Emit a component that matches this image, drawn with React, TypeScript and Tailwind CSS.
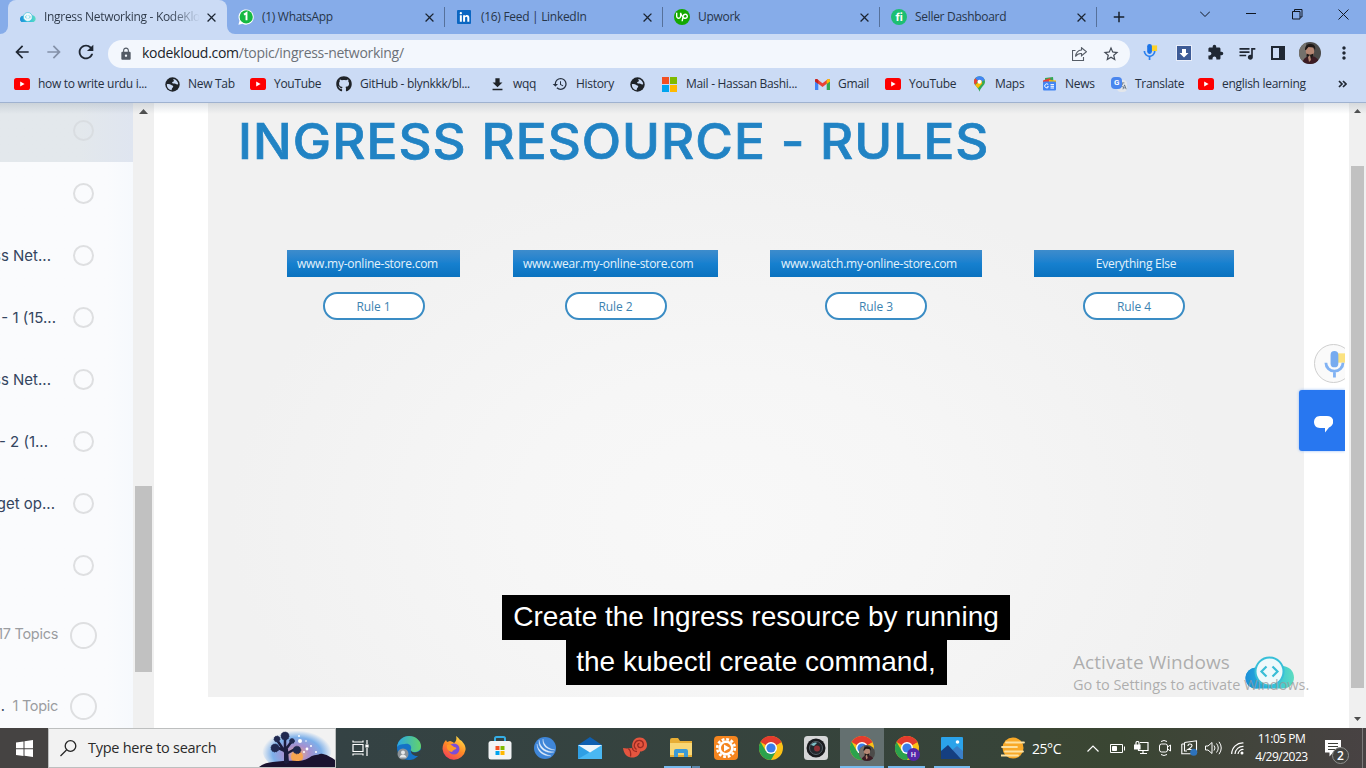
import React from 'react';
import { MdHistory, MdDownload, MdExtension, MdQueueMusic, MdArrowBack, MdArrowForward, MdRefresh, MdLock, MdStarOutline, MdClose, MdMoreVert, MdAdd, MdTranslate } from 'react-icons/md';
import { SiUpwork } from 'react-icons/si';
import { FaGithub, FaLinkedinIn } from 'react-icons/fa';

const YouTube = () => (
  <svg width="16" height="12" viewBox="0 0 16 12"><rect width="16" height="12" rx="2.6" fill="#fe0000" /><path d="M6.2 3.4v5.2L10.6 6z" fill="#fff" /></svg>
);

const Globe = () => (
  <svg width="15" height="15" viewBox="0 0 15 15">
    <circle cx="7.500" cy="7.500" r="7.200" fill="#1f2328" />
    <path d="M1.800 7.200c1.600-.5 3.300-.2 4.200.6.800.8 2 .5 2.200 1.500.2 1.200-1 1.500-1.300 2.400-.2.800-.2 1.400-.5 1.500C3.500 12.600 1.700 10.300 1.800 7.200z" fill="#cbdbf5" />
    <path d="M8.300 1.900c-.2 1 .8 1 .6 2-.3.900-1.600.6-1.800 1.500 0 1 1.300 1.200 2.500 1 1.200-.1 1.500.9 2.500 1 .6.100 1-.2 1.100-.4C13 4.300 11 2.200 8.300 1.900z" fill="#cbdbf5" />
  </svg>
);

const CloudLogo = ({ w = 50, id }: { w?: number; id: string }) => (
  <svg width={w} height={w * 0.66} viewBox="0 0 50 33">
    <defs><linearGradient id={id}><stop offset="0" stopColor="#1c8fd8" /><stop offset="0.55" stopColor="#2cc0dc" /><stop offset="1" stopColor="#5fdcc0" /></linearGradient></defs>
    <circle cx="11" cy="22" r="10.500" fill={`url(#${id})`} />
    <path d="M11 11.500C16 7 33 7 37 10c7 0 12 5 12 11.500S44 32.500 38 32.500H11C4 32.500 .5 27 .5 22S5 12 11 11.500z" fill={`url(#${id})`} />
    <circle cx="24.500" cy="15.500" r="14" fill="#eef9fb" stroke="#38bfd8" strokeWidth="2" />
    <path d="M21.500 10.500l-5 5 5 5M27.500 10.500l5 5-5 5" fill="none" stroke="#39bdd6" strokeWidth="2.200" />
  </svg>
);

const WhatsApp = () => (
  <svg width="16" height="16" viewBox="0 0 16 16">
    <path d="M.4 15.800l1.100-4A7.600 7.600 0 1 1 4.600 14.800z" fill="#fff" />
    <circle cx="8.200" cy="7.900" r="6.600" fill="#15b942" />
    <path d="M6 5.600L8.500 4v7.300" fill="none" stroke="#fff" strokeWidth="1.900" />
  </svg>
);

const Gmail = () => (
  <svg width="15" height="11" viewBox="0 0 15 11">
    <path d="M0 2v9h3.300V4z" fill="#4285f4" /><path d="M15 2v9h-3.300V4z" fill="#34a853" />
    <path d="M0 2.300V1.500C0 0 1.600-.3 2.600.5l4.900 3.700L12.400.5C13.400-.3 15 0 15 1.500v.8L7.500 8z" fill="#ea4335" />
    <path d="M11.700 1v3.900L15 2.400v-.9C15 0 13.400-.3 12.400.5z" fill="#fbbc04" /><path d="M0 1.500v.9l3.300 2.500V1L2.600.5C1.600-.3 0 0 0 1.500z" fill="#c5221f" />
  </svg>
);

const Pin = () => (
  <svg width="11" height="16" viewBox="0 0 12 17">
    <path d="M6 0a6 6 0 0 1 6 6c0 4-4.700 5.500-6 11C4.700 11.500 0 10 0 6a6 6 0 0 1 6-6z" fill="#34a853" />
    <path d="M6 0a6 6 0 0 1 5.600 3.800L6 8 1.300 2.200A6 6 0 0 1 6 0z" fill="#4285f4" />
    <path d="M1.300 2.200L4.300 5 1.300 9.500A6 6 0 0 1 1.300 2.200z" fill="#ea4335" />
    <path d="M1.200 9.600L8 3.800 9 8l-4.700 5z" fill="#fbbc04" /><circle cx="6" cy="6" r="2.200" fill="#fff" />
  </svg>
);

const News = () => (
  <svg width="15" height="14" viewBox="0 0 15 14">
    <path d="M3 1l8-1 .5 5H3z" fill="#34a853" /><path d="M1 3.500L8 1l2 5H1z" fill="#ea4335" /><path d="M7 3l7 .5V8H7z" fill="#fbbc04" />
    <rect x="1" y="4.600" width="13" height="9" rx="1" fill="#4285f4" /><path d="M6.300 7.600a2 2 0 1 0 .2 2.200H5M8.500 7.600H12M8.500 9.300H12M8.500 11H12" stroke="#fff" fill="none" />
  </svg>
);

const Translate = () => (
  <span className="relative block h-[15px] w-[16px]">
    <span className="absolute right-0 bottom-0 grid h-[12px] w-[10px] place-items-center rounded-sm bg-[#e3e6ea] text-[9px] text-[#5f6f80]"><MdTranslate /></span>
    <span className="absolute top-0 left-0 grid h-[12px] w-[11px] place-items-center rounded-sm bg-[#4a86ee] font-['Roboto'] text-[8px] leading-[12px] font-bold text-white">G</span>
  </span>
);

const Mic = ({ s = 18, soft = false }: { s?: number; soft?: boolean }) => (
  <svg width={s} height={s} viewBox="0 0 18 18" opacity={soft ? 0.58 : 1}>
    <rect x="9" y="1.500" width="7" height="6" fill="#fdd22a" /><rect x="5.500" y="0" width="5" height="10.500" rx="2.500" fill="#1a73e8" />
    <path d="M2.500 7.500a5.500 5.500 0 0 0 11 0M8 13v4" fill="none" stroke="#2b80ee" strokeWidth="1.800" />
  </svg>
);

const Face = ({ s }: { s: number }) => (
  <svg width={s} height={s} viewBox="0 0 22 22">
    <defs><clipPath id={`face${s}`}><circle cx="11" cy="11" r="11" /></clipPath></defs>
    <g clipPath={`url(#face${s})`}>
      <rect width="22" height="22" fill="#4c4b49" /><rect width="7" height="22" fill="#74716c" />
      <path d="M3 22c1-6 5-8 9-8s8 3 9 8z" fill="#3c1c24" /><ellipse cx="11" cy="9.500" rx="4.200" ry="5.500" fill="#b58773" />
      <path d="M6 8c0-5 3-6.500 6-6s5 2 4 6l-1.500-2.500-5-.5L7 8zM7.500 11.500c2 1.500 5 1.500 7 0-.5 4-2 5-3.500 5s-3-1-3.500-5z" fill="#1f1917" />
      <path d="M9 15l2-2 1 5-2 2z" fill="#b58773" />
    </g>
  </svg>
);

const Chrome = ({ s = 24 }: { s?: number }) => (
  <svg width={s} height={s} viewBox="0 0 24 24">
    <circle cx="12" cy="12" r="12" fill="#fbc116" />
    <path d="M12 12L1.600 6A12 12 0 0 1 22.400 6z" fill="#e33b2e" /><path d="M12 6h10.400L12 12z" fill="#e33b2e" />
    <path d="M1.600 6A12 12 0 0 0 12 24l5.200-9L12 12 6.800 15z" fill="#2ba24c" />
    <circle cx="12" cy="12" r="6" fill="#fff" /><circle cx="12" cy="12" r="4.600" fill="#3b7de9" />
  </svg>
);

function Tab({ icon, title, box, pad, active = false }: { icon: React.ReactNode; title: string; box: string; pad: string; active?: boolean }) {
  return (
    <div className={`relative flex h-[34px] items-center ${box} ${pad} ${active ? 'rounded-t-[8px] bg-[#cbdbf5]' : ''}`}>
      <span className="flex w-6 shrink-0 items-center">{icon}</span>
      <span className={`flex-1 overflow-hidden whitespace-nowrap pb-px ${active ? 'bg-gradient-to-r from-[#2d3848] from-80% to-[#cbdbf5] bg-clip-text text-transparent' : 'text-[#26354a]'}`}>{title}</span>
      <MdClose className="ml-1 shrink-0 text-[15px] text-[#1b2431]" />
    </div>
  );
}

const Divider = () => <div className="h-5 w-px bg-[#56719b]" />;

function Bookmark({ icon, label, box, gap }: { icon: React.ReactNode; label?: string; box: string; gap: string }) {
  return (
    <div className={`flex shrink-0 items-center whitespace-nowrap ${box}`}>
      <span className={`flex shrink-0 items-center ${gap}`}>{icon}</span>
      <span>{label}</span>
    </div>
  );
}

function Browser() {
  return (
    <header className="h-[103px] border-b border-[#9fb2d0] bg-[#cbdbf5] font-['Open_Sans',sans-serif] text-[12px] tracking-[-0.3px] text-[#26303f]">
      <div className="flex h-[34px] items-center bg-[#86ace9]">
        <div className="h-full w-2 bg-[#cbdbf5]"><div className="h-full rounded-br-[8px] bg-[#86ace9]" /></div>
        <Tab active icon={<CloudLogo w={16} id="tabcloud" />} title="Ingress Networking - KodeKlo" box="w-[219px]" pad="pl-3 pr-[8px]" />
        <div className="h-full w-2 bg-[#cbdbf5]"><div className="h-full rounded-bl-[8px] bg-[#86ace9]" /></div>
        <Tab icon={<WhatsApp />} title="(1) WhatsApp" box="w-[209px]" pad="pl-[3px] pr-[7px]" />
        <Divider />
        <Tab icon={<span className="grid size-[14px] place-items-center rounded-[1px] bg-[#0a66c2] text-[11px] text-white"><FaLinkedinIn /></span>} title="(16) Feed | LinkedIn" box="w-[217px]" pad="pl-[12px] pr-[7px]" />
        <Divider />
        <Tab icon={<span className="grid size-4 place-items-center rounded-full bg-[#14a800] text-[12px] text-white"><SiUpwork /></span>} title="Upwork" box="w-[216px]" pad="pl-[11px] pr-[7px]" />
        <Divider />
        <Tab icon={<span className="grid size-4 place-items-center rounded-full bg-[#1dbf73] pb-px font-['Inter'] text-[11px] leading-[14px] font-bold text-white">fi</span>} title="Seller Dashboard" box="w-[216px]" pad="pl-[11px] pr-[7px]" />
        <Divider />
        <MdAdd className="ml-[13px] text-[18px] text-[#18202c]" />
        <div className="ml-auto flex h-full w-[184px] pb-[6px] text-[#101722]">
          <span className="grid w-[46px] place-items-center"><svg width="10" height="6" fill="none" stroke="currentColor"><path d="M0 .5l5 5 5-5" /></svg></span>
          <span className="grid w-[46px] place-items-center"><svg width="10" height="2" fill="currentColor"><path d="M0 0h10v1H0z" /></svg></span>
          <span className="grid w-[46px] place-items-center"><svg width="11" height="11" fill="none" stroke="currentColor"><path d="M.5 2.500h7.500v7.500H.5zM2.500 2.500V.5h7.500v7.500H8" /></svg></span>
          <span className="grid w-[46px] place-items-center"><svg width="11" height="11" fill="none" stroke="currentColor"><path d="M.5.5l10 10M10.500.5l-10 10" /></svg></span>
        </div>
      </div>
      <div className="flex h-[36px] items-center pl-[12px] text-[#1f2733]">
        <MdArrowBack className="text-[20px]" />
        <MdArrowForward className="ml-[12px] text-[20px] text-[#8491a8]" />
        <MdRefresh className="ml-[11px] text-[22px]" />
        <div className="mt-[3px] ml-[11px] flex h-[28px] w-[1022px] items-center rounded-full bg-[#f3f7fd] pr-[10px] pl-[11px]">
          <MdLock className="text-[14px] text-[#525a65]" />
          <span className="ml-[9px] pb-[3px] text-[14px] tracking-[-0.28px] text-[#20242a]">kodekloud.com<span className="text-[#6c7178]">/topic/ingress-networking/</span></span>
          <svg className="ml-auto" width="15" height="14" viewBox="0 0 15 14" fill="none" stroke="#555c66" strokeWidth="1.100"><path d="M3.500 3.500h-3v10h11V10M9.500.8l5 4-5 4V6.500C7 6.300 5 7.300 3.500 9.500 4 5.500 6 3.300 9.500 3z" /></svg>
          <MdStarOutline className="ml-[15px] text-[18px] text-[#444b56]" />
        </div>
        <div className="ml-[12px] flex items-center pt-[1px]">
          <Mic s={17} />
          <span className="ml-[17px] grid size-[16px] place-items-center border border-[#e9eefa] bg-[#3d5b96]"><svg width="10" height="10" fill="#fff"><path d="M3 1h4v4h2.500L5 9.500.5 5H3z" /></svg></span>
          <MdExtension className="ml-[15px] text-[17px]" />
          <MdQueueMusic className="ml-[13px] text-[20px]" />
          <svg className="ml-[14px]" width="14" height="14"><path d="M1 1h12v12H1z" fill="none" stroke="#1f2733" strokeWidth="2" /><path d="M8 0h6v14H8z" fill="#1f2733" /></svg>
          <span className="ml-[14px]"><Face s={22} /></span>
          <MdMoreVert className="ml-[13px] text-[20px]" />
        </div>
      </div>
      <div className="flex h-[28px] items-center pl-[14px]">
        <Bookmark icon={<YouTube />} label="how to write urdu i..." box="w-[151px]" gap="w-[24px]" />
        <Bookmark icon={<Globe />} label="New Tab" box="w-[85px]" gap="w-[23px]" />
        <Bookmark icon={<YouTube />} label="YouTube" box="w-[86px]" gap="w-[24px]" />
        <Bookmark icon={<FaGithub size={16} color="#1f2328" />} label="GitHub - blynkkk/bl..." box="w-[153px]" gap="w-[24px]" />
        <Bookmark icon={<MdDownload size={17} color="#1f2328" />} label="wqq" box="w-[63px]" gap="w-[24px]" />
        <Bookmark icon={<MdHistory size={16} />} label="History" box="w-[78px]" gap="w-[24px]" />
        <Bookmark icon={<Globe />} box="w-[32px]" gap="w-[17px]" />
        <Bookmark icon={<svg width="15" height="15"><path d="M0 0h7v7H0z" fill="#f25022" /><path d="M8 0h7v7H8z" fill="#7fba00" /><path d="M0 8h7v7H0z" fill="#00a4ef" /><path d="M8 8h7v7H8z" fill="#ffb900" /></svg>} label="Mail - Hassan Bashi..." box="w-[153px]" gap="w-[24px]" />
        <Bookmark icon={<Gmail />} label="Gmail" box="w-[70px]" gap="w-[23px]" />
        <Bookmark icon={<YouTube />} label="YouTube" box="w-[89px]" gap="w-[24px]" />
        <Bookmark icon={<Pin />} label="Maps" box="w-[68px]" gap="w-[21px]" />
        <Bookmark icon={<News />} label="News" box="w-[69px]" gap="w-[23px]" />
        <Bookmark icon={<Translate />} label="Translate" box="w-[87px]" gap="w-[24px]" />
        <Bookmark icon={<YouTube />} label="english learning" box="w-[140px]" gap="w-[24px]" />
        <svg width="9" height="8" fill="none" stroke="#1f2733" strokeWidth="1.700"><path d="M1 1l3 3-3 3M5 1l3 3-3 3" /></svg>
      </div>
    </header>
  );
}

const lessons = [
  { text: '', pad: 'pr-[22px]' },
  { text: 'ss Net...', pad: 'pr-[22px]' },
  { text: '- 1 (15...', pad: 'pr-[17px]' },
  { text: 'ss Net...', pad: 'pr-[22px]' },
  { text: '- 2 (1...', pad: 'pr-[25px]' },
  { text: 'get op...', pad: 'pr-[18px]' },
  { text: '', pad: 'pr-[18px]' },
];

function Sidebar() {
  return (
    <aside className="w-[133px] shrink-0 overflow-hidden bg-gradient-to-r from-[#fafbfd] from-80% to-[#f6f9fd] font-['Inter',sans-serif]">
      <div className="flex h-[59px] items-center justify-end bg-gradient-to-r from-[#e3e8ec] from-60% to-[#dfe5f0] pr-[39px]">
        <span className="mb-[4px] size-[21px] rounded-full border-2 border-[#d9dde1]" />
      </div>
      {lessons.map((l, i) => (
        <div key={i} className="flex h-[62px] items-center justify-end pr-[39px] whitespace-nowrap">
          <span className={`pt-[2px] text-[15px] text-[#34455f] ${l.pad}`}>{l.text}</span>
          <span className="size-[21px] shrink-0 rounded-full border-2 border-[#dedfe1]" />
        </div>
      ))}
      <div className="flex h-[78px] items-center justify-end pr-[36px] whitespace-nowrap text-[14.500px] tracking-[-0.3px] text-[#9b9da1]">
        <span className="pr-[12px] pb-[3px]">17 Topics</span><span className="size-[27px] shrink-0 rounded-full border-2 border-[#dedfe1]" />
      </div>
      <div className="flex h-[64px] items-center justify-end pr-[36px] whitespace-nowrap text-[14.500px] tracking-[-0.3px] text-[#9b9da1]">
        <span className="pr-[8px] text-[#34455f]">.</span><span className="pr-[12px]">1 Topic</span><span className="size-[27px] shrink-0 rounded-full border-2 border-[#dedfe1]" />
      </div>
    </aside>
  );
}

function Rule({ host, label, box, align }: { host: string; label: string; box: string; align: string }) {
  return (
    <div className={`flex flex-col items-center ${box}`}>
      <div className={`flex h-[27px] w-full items-center bg-gradient-to-b from-[#3d8ccc] via-[#1680cf] to-[#0a72bf] pt-px text-[12px] tracking-[-0.25px] whitespace-nowrap text-[#e4f2fb] ${align}`}>{host}</div>
      <div className="mt-[15px] flex h-[28px] w-[102px] items-center justify-center rounded-full border-2 border-[#3a8cc4] bg-white pt-px text-[12px] tracking-[-0.1px] text-[#3d83b1]">{label}</div>
    </div>
  );
}

function Lesson() {
  return (
    <main className="relative h-full min-w-0 flex-1 overflow-hidden bg-white pl-[54px]">
      <section className="flex h-[594px] w-[1096px] flex-col bg-[#f1f1f1] bg-[radial-gradient(ellipse_at_47%_70%,#f8f8f8_0%,#f6f6f6_25%,#f1f1f1_60%)] font-['Open_Sans',sans-serif]">
        <h1 className="mt-[9px] ml-[30px] h-[60px] w-[720px] origin-left scale-x-[1.046] font-['Inter',sans-serif] text-[49px] leading-[60px] font-medium tracking-[1px] whitespace-nowrap text-[#2183c4] [-webkit-text-stroke:0.7px_#2183c4]">INGRESS RESOURCE - RULES</h1>
        <div className="mt-[78px] flex pl-[79px]">
          <Rule host="www.my-online-store.com" label="Rule 1" box="w-[173px]" align="pl-[10px]" />
          <Rule host="www.wear.my-online-store.com" label="Rule 2" box="ml-[53px] w-[205px]" align="pl-[10px]" />
          <Rule host="www.watch.my-online-store.com" label="Rule 3" box="ml-[52px] w-[212px]" align="pl-[11px]" />
          <Rule host="Everything Else" label="Rule 4" box="ml-[52px] w-[200px]" align="justify-center pl-1" />
        </div>
        <div className="mt-[275px] flex flex-col items-center font-['Liberation_Sans',sans-serif] text-[28px] whitespace-nowrap text-white">
          <p className="flex h-[45px] w-[508px] items-center justify-center bg-black pb-px">Create the Ingress resource by running</p>
          <p className="flex h-[45px] w-[381px] items-center justify-center bg-black pb-px">the kubectl create command,</p>
        </div>
      </section>
      <div className="absolute top-[241px] right-[-8px] grid size-[39px] place-items-center rounded-full border border-[#cfcfcf] bg-[#fafafa] pt-[3px] pl-[4px]"><Mic s={28} soft /></div>
      <div className="absolute top-[287px] right-0 flex h-[61px] w-[46px] items-center rounded-l-[3px] bg-[#2877f0] pl-[15px] shadow-[0_0_3px_#8fb8f5]">
        <svg className="mt-[8px]" width="19" height="17" fill="#fff"><path d="M6 0h7c8 0 8 9 2 11.500L11 16.500V12H6C-2 12-2 0 6 0z" /></svg>
      </div>
      <div className="absolute top-[553px] left-[1091px]"><CloudLogo id="biglogo" /></div>
      <div className="absolute top-[546px] left-[919px] font-['Open_Sans',sans-serif] whitespace-nowrap text-[#979797]/75">
        <p className="text-[19px] leading-[27px] tracking-[0.06px]">Activate Windows</p>
        <p className="text-[14.500px] leading-[18px] tracking-[-0.04px]">Go to Settings to activate Windows.</p>
      </div>
    </main>
  );
}

function Cell({ children, line = '' }: { children: React.ReactNode; line?: string }) {
  return (
    <div className="flex h-full w-[45.250px] shrink-0 flex-col items-center">
      <div className="grid h-[38px] w-full place-items-center pt-px">{children}</div>
      <div className={`h-[2px] ${line}`} />
    </div>
  );
}

const Tree = () => (
  <svg width="76" height="38" viewBox="0 0 76 38">
    <defs>
      <radialGradient id="sky" cx=".5" cy=".6" r=".5"><stop offset="0" stopColor="#f6b07c" /><stop offset=".35" stopColor="#a78fcf" /><stop offset=".7" stopColor="#7db0ea" /><stop offset="1" stopColor="#f2f2f2" /></radialGradient>
    </defs>
    <ellipse cx="38" cy="20" rx="35" ry="23" fill="url(#sky)" /><circle cx="38" cy="28" r="6" fill="#f7a550" />
    <path d="M0 38c6-5 14-5 24-6 9-1 14 1 21-1 5-1 7-5 12-5 3 0 3-2 7-1 5 1 9 4 12 6v7z" fill="#1b1330" />
    <path d="M27 35c1-7 1-10-1-13l-9-4M27 25l9-5M26 22V7M27 20l6-8M26 23l-8-12" stroke="#1c1c3d" strokeWidth="2.500" fill="none" />
    <path d="M25 20h4l1 14h-5z" fill="#1c1c3d" />
    <g fill="#20284f" stroke="#20284f" strokeDasharray="1 1"><circle cx="16" cy="19" r="4" /><circle cx="26" cy="7" r="4" /><circle cx="18" cy="10" r="3" /><circle cx="33" cy="12" r="2.500" /><circle cx="38" cy="21" r="3.800" /></g>
    <g fill="#fff"><circle cx="41" cy="12" r="2" /><circle cx="48" cy="20" r="1.400" /><circle cx="52" cy="17" r="1" /><circle cx="45" cy="23" r="1" /><circle cx="57" cy="23" r="1" /><circle cx="40" cy="7" r="1" /><circle cx="47" cy="12" r=".8" /></g>
  </svg>
);

function Taskbar() {
  return (
    <footer className="flex h-[40px] items-center bg-gradient-to-r from-[#474342] via-[#3a4633] via-[82%] to-[#484243] font-['Open_Sans',sans-serif] text-white">
      <div className="grid h-full w-[48px] shrink-0 place-items-center bg-[#454342]">
        <svg width="17" height="17" fill="#fff"><path d="M0 2.400l7.500-1v6.800H0zM8.500 1.200L17 0v8.200H8.500zM0 9.200h7.500V16L0 15zM8.500 9.200H17V17l-8.500-1.200z" /></svg>
      </div>
      <div className="flex h-full w-[288px] shrink-0 items-center border border-[#bdbfbf] bg-[#f2f2f2] pl-[11px]">
        <svg width="17" height="17" fill="none" stroke="#252525" strokeWidth="1.300"><circle cx="10.500" cy="6" r="5.300" /><path d="M6.500 10L.5 16" /></svg>
        <span className="ml-[11px] text-[14.500px] tracking-[-0.27px] whitespace-nowrap text-[#2b2b2b]">Type here to search</span>
        <div className="ml-auto"><Tree /></div>
      </div>
      <div className="flex h-full w-[704px] shrink-0 bg-gradient-to-r from-[#344244] to-[#374438]">
        <div className="grid w-[50.500px] shrink-0 place-items-center pr-[2px]">
          <svg width="17" height="16" fill="none" stroke="#fff" strokeWidth="1.200"><path d="M1 4.500h10v7H1zM1 2.500V.5M11 2.500V.5M1 2h10M1 15.500v-2M11 15.500v-2M1 14h10M15 0v4M15 8v8" /><path d="M14 5h2v2h-2z" fill="#fff" /></svg>
        </div>
        <Cell>
          <svg width="24" height="24" viewBox="0 0 24 24"><defs><linearGradient id="edge"><stop offset="0" stopColor="#2aa7e5" /><stop offset="1" stopColor="#63d36a" /></linearGradient></defs><circle cx="12" cy="12" r="12" fill="#1572c6" /><path d="M0 11C1 4 6 0 12 0c7 0 12 5 12 10 0 4-3 6-7 6-3 0-4-1-3-3 1-3-2-6-6-5-4 0-7 1-8 3z" fill="url(#edge)" /><path d="M24 13.500c-3 4-11 4-10-.5-1 4 2 7 6 7 1 0 2.500-.3 3-.8.700-1 2-3 1-5.700z" fill="#344244" /><circle cx="6" cy="18" r="5.500" fill="#8b9298" /><circle cx="6" cy="16.500" r="2" fill="#e6e8ea" /><path d="M2.500 21.500c1-4 6-4 7 0z" fill="#e6e8ea" /></svg>
        </Cell>
        <Cell>
          <svg width="24" height="24" viewBox="0 0 24 24"><defs><linearGradient id="fox" x1=".8" y1="0" x2=".2" y2="1"><stop offset="0" stopColor="#ffe14a" /><stop offset=".5" stopColor="#ff8a25" /><stop offset="1" stopColor="#f23a5c" /></linearGradient></defs><path d="M14 0c2 1 3 3 4 4 1 0 2 1 2.500 2 2 2 3.500 5 3 8A11.600 11.600 0 0 1 .5 13C.5 9 2 6 4 4l1 2 3-1c1 0 3 1 4 2 2-1 3-4 2-7z" fill="url(#fox)" /><circle cx="12" cy="13" r="5.500" fill="#7c4dd8" /><path d="M5 9c3-1 5 0 7 2 2 0 3 1 2 2-2 1-3 1-4 3-3 0-6-3-5-7z" fill="#ff9a28" /></svg>
        </Cell>
        <Cell>
          <svg width="24" height="24" viewBox="0 0 24 24"><path d="M7 7V2.500Q7 1 8.500 1h7Q17 1 17 2.500V7" fill="none" stroke="#35aee6" strokeWidth="2" /><rect x=".5" y="5" width="23" height="18.500" rx="2.500" fill="#f2f4f5" /><path d="M7.500 10H11.500v4H7.500z" fill="#f25022" /><path d="M12.500 10h4v4h-4z" fill="#7fba00" /><path d="M7.500 15h4v4h-4z" fill="#00a4ef" /><path d="M12.500 15h4v4h-4z" fill="#ffb900" /></svg>
        </Cell>
        <Cell>
          <svg width="22" height="22" viewBox="0 0 22 22"><circle cx="11" cy="11" r="11" fill="#3f86d8" /><path d="M5 3c-1 9 7 14 15 12-7 0-14-4-15-12zM9 2c-1 7 4 11 12 11C15 12 9 8 9 2zM3 7c0 8 6 12 14 12C10 17 4 14 3 7z" fill="#e4effb" stroke="#e4effb" strokeWidth=".3" /></svg>
        </Cell>
        <Cell>
          <svg width="24" height="22" viewBox="0 0 24 22"><path d="M0 8l12-8 12 8z" fill="#0f5fb0" /><path d="M0 8h24v14H0z" fill="#2f9fe4" /><path d="M0 22L24 8v14z" fill="#4ab8f3" /><path d="M0 8h24l-12 7.500z" fill="#eef5fa" /></svg>
        </Cell>
        <Cell>
          <svg width="24" height="21" viewBox="0 0 24 21">
            <path d="M0 11c4 1 7 0 9.500 0C8 5 12 0 17 .5c4 0 7 3.500 7 7.500s-3 6.500-7 6.500C17 18 13 21 8.500 20.500 4 20.500 1 17 0 11z" fill="#e4553f" />
            <path d="M13.500 12.500C9 9 12 3 17 3.500c4 .5 4.500 6 1 7-3.500.7-4.500-4-1.500-4M9.500 11c0 2 2 3.500 4.500 3.500M5 11.500c2 1 3 4 2.500 8" fill="none" stroke="#9c2a22" strokeWidth="1.300" />
          </svg>
        </Cell>
        <div className="flex h-full w-[45.250px] shrink-0 flex-col">
          <div className="grid h-[38px] place-items-center pt-px pl-px">
            <svg width="22" height="19" viewBox="0 0 22 19"><path d="M0 2Q0 0 2 0h6l2 3h12v16H0z" fill="#e8ae35" /><path d="M0 5h22v12H0z" fill="#f9d775" /><path d="M4 19v-6q0-2 2-2h10q2 0 2 2v6h-4v-4H8v4z" fill="#3c9ad6" /></svg>
          </div>
          <div className="flex h-[2px] pl-[6px]"><span className="w-[27px] bg-[#76b9ed]" /><span className="ml-px w-[8px] bg-[#5a87ab]" /></div>
        </div>
        <Cell>
          <svg width="24" height="24" viewBox="0 0 24 24"><rect width="24" height="24" rx="4" fill="#f5851f" /><circle cx="12" cy="12" r="8.800" fill="none" stroke="#fff" strokeWidth="2.600" strokeDasharray="2.800 1.800" /><circle cx="12" cy="12" r="6.300" fill="none" stroke="#fff" strokeWidth="2.600" /><path d="M10 8.500v7l6-3.500z" fill="#fff" /></svg>
        </Cell>
        <Cell><Chrome /></Cell>
        <Cell>
          <svg width="24" height="24" viewBox="0 0 24 24"><rect width="24" height="24" rx="3.500" fill="#d6d7d8" /><circle cx="12" cy="12" r="9.500" fill="#191b1e" /><circle cx="12" cy="12" r="6.500" fill="#22282d" stroke="#566068" /><circle cx="13" cy="12.500" r="3" fill="#8b2f35" /><path d="M7 9c1-2 4-3 6-2l-3 3z" fill="#7fc0c8" /></svg>
        </Cell>
        <div className="flex h-full w-[45.250px] shrink-0 flex-col">
          <div className="mx-auto grid h-[38px] w-[44px] place-items-center bg-[#647070] pt-px">
            <span className="relative block size-6"><Chrome /><span className="absolute top-[9px] left-[9px]"><Face s={16} /></span></span>
          </div>
          <div className="mx-auto h-[2px] w-[44px] bg-[#76b9ed]" />
        </div>
        <Cell line="w-[37px] bg-[#76b9ed]">
          <span className="relative block size-6"><Chrome /><span className="absolute top-[12px] left-[12px] grid size-[13px] place-items-center rounded-full bg-[#5426a8] text-[7px] leading-[13px] font-semibold">H</span></span>
        </Cell>
        <Cell line="w-[36px] bg-[#76b9ed]">
          <svg width="22" height="22" viewBox="0 0 22 22"><rect width="22" height="22" rx="1" fill="#2ba3ea" /><circle cx="16.500" cy="5" r="1.800" fill="#fff" /><path d="M10 14l6-5 6 5v8H10z" fill="#3b80c8" /><path d="M0 14l7-6 13 14H0z" fill="#153f80" /></svg>
        </Cell>
        <div className="grid w-[60px] shrink-0 place-items-center pl-[16px]">
          <svg width="24" height="22" viewBox="0 0 24 22"><circle cx="12" cy="11" r="10.500" fill="#f9a928" /><path d="M5 5.500h18M1 10h15M4 14.500h18M0 18.500h17" stroke="#fde1a0" strokeWidth="1.800" strokeLinecap="round" /></svg>
        </div>
      </div>
      <span className="-ml-2 w-[49px] shrink-0 text-[14px] tracking-[-0.45px]">25°C</span>
      <div className="flex h-full shrink-0 items-center text-white">
        <span className="grid w-6 place-items-center"><svg width="12" height="7" fill="none" stroke="currentColor" strokeWidth="1.200"><path d="M.5 6.500L6 1l5.500 5.500" /></svg></span>
        <span className="grid w-6 place-items-center"><svg width="15" height="9" fill="none" stroke="currentColor"><path d="M.5.5h12v8H.5zM14.500 2.500v4" /><path d="M2.500 2.500h4v4h-4z" fill="#fff" /></svg></span>
        <span className="grid w-6 place-items-center"><svg width="15" height="14" fill="none" stroke="currentColor" strokeWidth="1.200"><path d="M6 1.500h8v8H4.500V7M9 9.500v3M6 12.500h7M2 4V2q0-1.500 1.500-1.500T5 2v2" /><path d="M0 4h6v4H0z" fill="#fff" /></svg></span>
        <span className="grid w-6 place-items-center"><svg width="12" height="16" fill="none" stroke="currentColor"><rect x=".5" y="4" width="8" height="8" rx="2" /><path d="M8.500 7l3-2v6l-3-2M2 1.500q3-2 6 0M2 14.500q3 2 6 0" /></svg></span>
        <span className="grid w-6 place-items-center"><svg width="17" height="16" fill="none" stroke="currentColor" strokeWidth="1.100"><path d="M3.500 2.500L15.500.8v12.500M.8 4h2.700M.8 4v9.800h9M3.500 2.500v8.500H6M7 6q0-2 2-2t2 1.500Q11 7 7 9.500h5" /><circle cx="12.700" cy="12.300" r="3.500" fill="#2d73bd" stroke="none" /></svg></span>
        <span className="grid w-6 place-items-center"><svg width="17" height="14" fill="none" stroke="currentColor"><path d="M.5 5v4H3l4 3.500v-11L3 5zM9 4.500q2 2.500 0 5M11.500 2.500q3.500 4.500 0 9M14 .8q4.500 6.200 0 12.400" /></svg></span>
        <span className="grid w-6 place-items-center"><svg width="13" height="13" fill="none" stroke="currentColor" strokeWidth="1.200"><path d="M.7 12A11 11 0 0 1 12.500 1M4 12a8 8 0 0 1 8.500-7.600M7 12a5 5 0 0 1 5.500-4.500" /><circle cx="11" cy="11" r="1.500" fill="#fff" stroke="none" /></svg></span>
      </div>
      <div className="ml-[4px] w-[57px] shrink-0 text-center text-[12px] leading-[18px] tracking-[-0.5px] whitespace-nowrap"><p>11:05 PM</p><p>4/29/2023</p></div>
      <div className="relative ml-[15px] h-[16px] w-[26px]">
        <svg width="16" height="17"><path d="M0 0h16v12.500h-8L4.500 16.500v-4H0z" fill="#fff" /><path d="M3 3.500h10M3 6.500h10M3 9.500h7" stroke="#3d3f39" /></svg>
        <span className="absolute top-[7px] left-[7px] grid size-[17px] place-items-center rounded-full border border-[#8f908e] bg-[#434340] text-[12px] leading-[15px] font-semibold">2</span>
      </div>
      <span className="mr-[3px] ml-auto h-full w-px bg-[#7c7979]" />
    </footer>
  );
}

export default function App() {
  return (
    <div className="flex h-[768px] w-[1366px] flex-col overflow-hidden bg-white">
      <Browser />
      <div className="relative flex h-[625px]">
        <Sidebar />
        <div className="w-[21px] shrink-0 bg-[#f0f0f0]">
          <svg className="mt-[6px] ml-[6px]" width="9" height="5" fill="#4d4d4d"><path d="M0 5l4.500-5L9 5z" /></svg>
          <div className="mt-[372px] ml-[2px] h-[186px] w-[17px] bg-[#c1c1c1]" />
        </div>
        <Lesson />
        <div className="w-1 shrink-0 bg-white" />
        <div className="flex w-[17px] shrink-0 flex-col items-center bg-[#f0f0f0]">
          <svg className="mt-[6px]" width="7" height="4" fill="#4d4d4d"><path d="M0 4l3.500-4L7 4z" /></svg>
          <div className="mt-[53px] h-[522px] w-[13px] bg-[#c1c1c1]" />
          <svg className="mt-[29px]" width="7" height="4" fill="#4d4d4d"><path d="M0 0l3.500 4L7 0z" /></svg>
        </div>
        <div className="absolute inset-x-0 top-0 h-[11px] bg-gradient-to-b from-[#8593a0]/25 to-transparent" />
      </div>
      <Taskbar />
    </div>
  );
}
